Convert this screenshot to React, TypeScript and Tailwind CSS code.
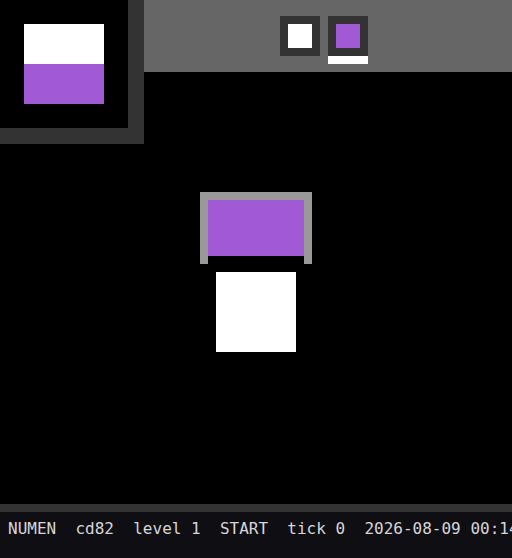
export default function App() {
  return (
    <div className="flex h-[558px] w-[512px] flex-col overflow-hidden bg-black">
      {/* top row: preview panel + toolbar */}
      <div className="flex items-start">
        <div className="h-36 w-36 shrink-0 border-b-[16px] border-r-[16px] border-[#333333] p-6">
          <div className="h-10 w-20 bg-white" />
          <div className="h-10 w-20 bg-[#a259d6]" />
        </div>
        <div className="flex h-[72px] flex-1 items-start gap-2 bg-[#666666] pl-[136px] pt-4">
          <div className="h-10 w-10 bg-[#333333] p-2">
            <div className="h-6 w-6 bg-white" />
          </div>
          <div className="flex flex-col">
            <div className="h-10 w-10 bg-[#333333] p-2">
              <div className="h-6 w-6 bg-[#a259d6]" />
            </div>
            <div className="h-2 w-10 bg-white" />
          </div>
        </div>
      </div>

      {/* stage */}
      <div className="flex flex-1 flex-col items-center pt-12">
        <div className="h-[72px] w-[112px] border-x-8 border-t-8 border-[#999999]">
          <div className="h-14 bg-[#a259d6]" />
        </div>
        <div className="mt-2 h-20 w-20 bg-white" />
      </div>

      {/* status bar */}
      <div className="h-[54px] shrink-0 border-t-8 border-[#333333] bg-[#0f0e13] px-2 pt-[5px]">
        <div className="whitespace-pre font-['DejaVu_Sans_Mono',monospace] text-base leading-6 text-[#d6d6da]">
          {"NUMEN  cd82  level 1  START  tick 0  2026-08-09 00:14"}
        </div>
      </div>
    </div>
  );
}
